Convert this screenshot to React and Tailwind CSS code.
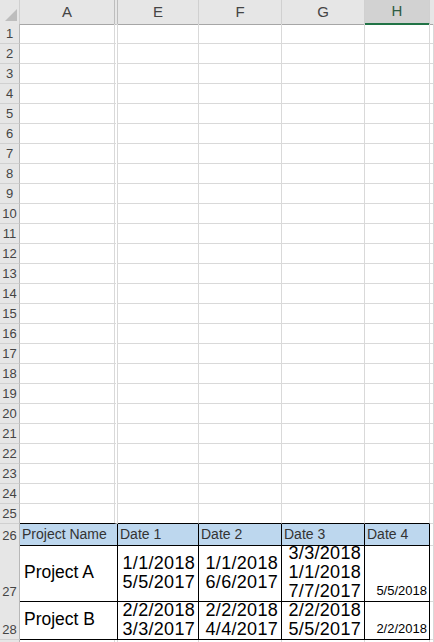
const headCell = "flex items-center justify-center border-r border-b border-b-[#a6a6a6] border-r-[#d0d0d0] bg-[#e6e6e6] text-[15px] text-[#444]";
const rowHead = "flex items-end justify-center border-r border-b border-r-[#b8b8b8] border-b-[#d0d0d0] bg-[#e6e6e6] text-[13px] leading-[18px] text-[#444]";
const gridCell = "border-r border-b border-[#d9d9d9]";
const tableCell = "border-r border-b border-black";
const grid = "grid grid-cols-[20px_98px_81px_83px_83px_65px_4px]";

function EmptyRow({ n, last }) {
  return (
    <div className={`${grid} h-5`}>
      <div className={rowHead}>{n}</div>
      <div className={last ? "border-r-[4px] border-r-[#d9d9d9] border-double border-b border-b-black" : "border-r-[4px] border-r-[#d9d9d9] border-double border-b border-b-[#d9d9d9]"} />
      {[1, 2, 3, 4].map((i) => (
        <div key={i} className={last ? "border-r border-r-[#d9d9d9] border-b border-b-black" : gridCell} />
      ))}
      <div className={gridCell} />
    </div>
  );
}

function DateCell({ lines }) {
  return (
    <div className={`${tableCell} flex flex-col items-end justify-center pr-[3px] text-[18px] leading-[19px] tracking-[0.3px] text-black`}>
      {lines.map((l) => (
        <span key={l}>{l}</span>
      ))}
    </div>
  );
}

export default function App() {
  return (
    <div
      className="h-[642px] w-[434px] overflow-hidden bg-white"
      style={{ fontFamily: '"Liberation Sans", Arial, sans-serif' }}
    >
      {/* column letters */}
      <div className={`${grid} h-6`}>
        <div className="flex items-end justify-end border-r border-b border-b-[#a6a6a6] border-r-[#d0d0d0] bg-[#e6e6e6] pr-[2px] pb-[3px]">
          <svg width="12" height="12" viewBox="0 0 12 12">
            <path d="M12 0 L12 12 L0 12 Z" fill="#bdbdbd" />
          </svg>
        </div>
        <div className="flex items-center justify-center border-r-[4px] border-double border-r-[#bdbdbd] border-b border-b-[#a6a6a6] bg-[#e6e6e6] text-[15px] text-[#444]">
          A
        </div>
        <div className={headCell}>E</div>
        <div className={headCell}>F</div>
        <div className={headCell}>G</div>
        <div className="flex items-center justify-center border-r border-r-[#d0d0d0] border-b-2 border-b-[#217346] bg-[#d2d2d2] text-[15px] text-[#2f5d44]">
          H
        </div>
        <div className="border-b border-b-[#a6a6a6] bg-[#e6e6e6]" />
      </div>

      {Array.from({ length: 25 }, (_, i) => (
        <EmptyRow key={i} n={i + 1} last={i === 24} />
      ))}

      {/* row 26: table header */}
      <div className={`${grid} h-5`}>
        <div className={rowHead}>26</div>
        {["Project Name", "Date 1", "Date 2", "Date 3", "Date 4"].map((t) => (
          <div
            key={t}
            className={`${tableCell} flex items-center bg-[#bdd7ee] pl-[2px] text-[14px] text-[#333]`}
          >
            {t}
          </div>
        ))}
        <div className={gridCell} />
      </div>

      {/* row 27 */}
      <div className={`${grid} h-14`}>
        <div className={rowHead}>27</div>
        <div className={`${tableCell} flex items-center pl-[4px] text-[17.5px] text-black`}>Project A</div>
        <DateCell lines={["1/1/2018", "5/5/2017"]} />
        <DateCell lines={["1/1/2018", "6/6/2017"]} />
        <DateCell lines={["3/3/2018", "1/1/2018", "7/7/2017"]} />
        <div className={`${tableCell} flex items-end justify-end pr-[2px] pb-[1px] text-[13px] text-black`}>5/5/2018</div>
        <div className={gridCell} />
      </div>

      {/* row 28 */}
      <div className={`${grid} h-10`}>
        <div className={rowHead}>28</div>
        <div className={`${tableCell} flex items-center pl-[4px] text-[17.5px] text-black`}>Project B</div>
        <DateCell lines={["2/2/2018", "3/3/2017"]} />
        <DateCell lines={["2/2/2018", "4/4/2017"]} />
        <DateCell lines={["2/2/2018", "5/5/2017"]} />
        <div className={`${tableCell} flex items-end justify-end pr-[2px] pb-[1px] text-[13px] text-black`}>2/2/2018</div>
        <div className={gridCell} />
      </div>

      {/* next row, only its top edge shows */}
      <EmptyRow n="" />
    </div>
  );
}
